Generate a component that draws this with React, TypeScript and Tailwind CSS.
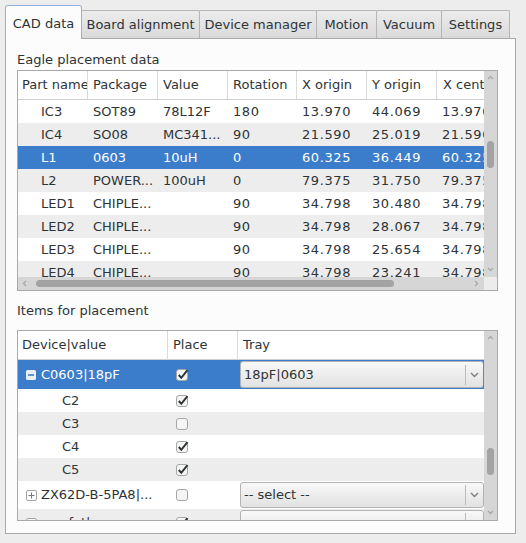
import React from 'react';

const tabs = [
  { name: 'CAD data', w: 'w-[77px]', active: true },
  { name: 'Board alignment', w: 'w-[119px]' },
  { name: 'Device manager', w: 'w-[118px]' },
  { name: 'Motion', w: 'w-[61px]' },
  { name: 'Vacuum', w: 'w-[66px]' },
  { name: 'Settings', w: 'w-[69px]' },
];

const columns = [
  { title: 'Part name', w: 'w-[70px]', pad: 'pl-[4px]' },
  { title: 'Package', w: 'w-[70px]', pad: 'pl-[5px]' },
  { title: 'Value', w: 'w-[70px]', pad: 'pl-[5px]' },
  { title: 'Rotation', w: 'w-[69px]', pad: 'pl-[5px]' },
  { title: 'X origin', w: 'w-[70px]', pad: 'pl-[5px]' },
  { title: 'Y origin', w: 'w-[70px]', pad: 'pl-[5px]' },
  { title: 'X center', w: 'w-[70px]', pad: 'pl-[6px]' },
];

const parts = [
  ['IC3', 'SOT89', '78L12F', '180', '13.970', '44.069', '13.970'],
  ['IC4', 'SO08', 'MC341...', '90', '21.590', '25.019', '21.590'],
  ['L1', '0603', '10uH', '0', '60.325', '36.449', '60.325'],
  ['L2', 'POWER...', '100uH', '0', '79.375', '31.750', '79.375'],
  ['LED1', 'CHIPLE...', '', '90', '34.798', '30.480', '34.798'],
  ['LED2', 'CHIPLE...', '', '90', '34.798', '28.067', '34.798'],
  ['LED3', 'CHIPLE...', '', '90', '34.798', '25.654', '34.798'],
  ['LED4', 'CHIPLE...', '', '90', '34.798', '23.241', '34.798'],
];

function Arrow({ dir }: { dir: 'up' | 'down' | 'left' | 'right' }) {
  const d = {
    up: 'M1 4 L3.5 1.5 L6 4',
    down: 'M1 2 L3.5 4.5 L6 2',
    left: 'M4 1 L1.5 3.5 L4 6',
    right: 'M2 1 L4.5 3.5 L2 6',
  }[dir];
  return (
    <svg width="7" height="7" viewBox="0 0 7 7">
      <path d={d} stroke="#a9a9a9" strokeWidth="1.3" fill="none" />
    </svg>
  );
}

function VScroll({ thumbTop }: { thumbTop: string }) {
  return (
    <div className="flex w-[13px] flex-col items-center bg-[#d6d6d6] py-[4px]">
      <Arrow dir="up" />
      <div className={`${thumbTop} h-[27px] w-[7px] rounded-full bg-[#a3a3a3]`} />
      <div className="flex-1" />
      <Arrow dir="down" />
    </div>
  );
}

function CheckBox({ checked }: { checked: boolean }) {
  return (
    <svg width="14" height="14" viewBox="0 0 14 14">
      <rect x="0.5" y="1.5" width="11" height="11" rx="2.5" fill="#f5f5f5" stroke="#a6a6a6" />
      {checked && <path d="M2.8 7 L5.3 9.8 L11.5 2.2" stroke="#2e3436" strokeWidth="2" fill="none" />}
    </svg>
  );
}

function Toggle({ open }: { open: boolean }) {
  return open ? (
    <svg width="10" height="10" viewBox="0 0 10 10">
      <rect x="0" y="0" width="10" height="10" rx="1.5" fill="#e9eff7" />
      <path d="M2 5 H8" stroke="#3b7dcb" strokeWidth="1.6" />
    </svg>
  ) : (
    <svg width="11" height="11" viewBox="0 0 11 11">
      <rect x="0.5" y="0.5" width="10" height="10" rx="1.5" fill="#ffffff" stroke="#a3a3a3" />
      <path d="M2.5 5.5 H8.5 M5.5 2.5 V8.5" stroke="#7a7a7a" strokeWidth="1" />
    </svg>
  );
}

function Combo({ text, focus }: { text: string; focus?: boolean }) {
  return (
    <div
      className={`flex h-full items-center rounded-[3px] border bg-gradient-to-b from-[#f8f8f8] to-[#e2e2e2] text-[#2e3436] ${
        focus ? 'border-[#b3b3b3] border-r-[#4f88cf]' : 'border-[#b3b3b3]'
      }`}
    >
      <span className="flex-1 pl-[3px] whitespace-nowrap">{text}</span>
      <span className="h-[20px] w-px bg-[#bcbcbc]" />
      <span className="flex w-[17px] justify-center">
        <svg width="9" height="6" viewBox="0 0 9 6">
          <path d="M1 1 L4.5 4.5 L8 1" stroke="#7b7b7b" strokeWidth="1.3" fill="none" />
        </svg>
      </span>
    </div>
  );
}

function PartsTable() {
  return (
    <div className="mt-[2px] flex h-[221px] w-[481px] flex-col border border-[#a9a9a9] bg-white">
      <div className="flex min-h-0 flex-1">
        <div className="w-[466px] overflow-hidden">
          <div className="flex h-[29px] border-b border-[#cfcfcf]">
            {columns.map(c => (
              <div
                key={c.title}
                className={`${c.w} ${c.pad} shrink-0 overflow-hidden whitespace-nowrap border-r border-[#dadada] leading-[28px]`}
              >
                {c.title}
              </div>
            ))}
          </div>
          {parts.map((row, i) => (
            <div
              key={row[0]}
              className={`flex h-[23px] items-center ${
                i === 2 ? 'bg-[#3b7dcb] text-white' : i % 2 ? 'bg-[#ededed]' : 'bg-white'
              }`}
            >
              {row.map((cell, j) => (
                <div
                  key={j}
                  className={`${columns[j].w} shrink-0 overflow-hidden whitespace-nowrap ${
                    j === 0 ? 'pl-[23px]' : 'pl-[5px]'
                  } ${j >= 3 ? 'tracking-[0.6px]' : ''}`}
                >
                  {cell}
                </div>
              ))}
            </div>
          ))}
        </div>
        <VScroll thumbTop="mt-[59px]" />
      </div>
      <div className="flex h-[13px]">
        <div className="flex flex-1 items-center bg-[#d6d6d6] px-[4px]">
          <Arrow dir="left" />
          <div className="ml-[7px] h-[7px] w-[358px] rounded-full bg-[#a3a3a3]" />
          <div className="flex-1" />
          <Arrow dir="right" />
        </div>
        <div className="w-[13px] bg-[#ececec]" />
      </div>
    </div>
  );
}

type Item = {
  name: string;
  level: number;
  checked: boolean;
  bg: string;
  h: string;
  toggle?: boolean;
  open?: boolean;
  tray?: string;
  selected?: boolean;
};

const items: Item[] = [
  { name: 'C0603|18pF', level: 0, checked: true, bg: 'bg-[#3b7dcb] text-white', h: 'h-[29px]', toggle: true, open: true, tray: '18pF|0603', selected: true },
  { name: 'C2', level: 1, checked: true, bg: 'bg-white', h: 'h-[23px]' },
  { name: 'C3', level: 1, checked: false, bg: 'bg-[#ededed]', h: 'h-[23px]' },
  { name: 'C4', level: 1, checked: true, bg: 'bg-white', h: 'h-[23px]' },
  { name: 'C5', level: 1, checked: true, bg: 'bg-[#ededed]', h: 'h-[23px]' },
  { name: 'ZX62D-B-5PA8|...', level: 0, checked: false, bg: 'bg-white', h: 'h-[28px]', toggle: true, tray: '-- select --' },
  { name: 'mosfet|...', level: 0, checked: true, bg: 'bg-[#ededed]', h: 'h-[28px]', toggle: true, tray: '' },
];

function ItemsTable() {
  return (
    <div className="mt-[11px] flex h-[191px] w-[481px] border border-[#a9a9a9] bg-white">
      <div className="w-[466px] overflow-hidden">
        <div className="flex h-[29px] border-b border-[#cfcfcf] leading-[28px]">
          <div className="w-[150px] border-r border-[#dadada] pl-[4px]">Device|value</div>
          <div className="w-[70px] border-r border-[#dadada] pl-[5px]">Place</div>
          <div className="flex-1 pl-[5px]">Tray</div>
        </div>
        {items.map(it => (
          <div key={it.name} className={`flex ${it.h} items-center ${it.bg}`}>
            <div className="flex w-[150px] items-center whitespace-nowrap">
              {it.level === 0 ? (
                <>
                  <span className="ml-[8px] flex w-[15px] items-center">{it.toggle && <Toggle open={!!it.open} />}</span>
                  <span>{it.name}</span>
                </>
              ) : (
                <span className="pl-[44px]">{it.name}</span>
              )}
            </div>
            <div className="flex w-[70px] items-center pl-[8px]">
              <CheckBox checked={it.checked} />
            </div>
            <div className="h-full flex-1 py-[1px] pl-[2px]">
              {it.tray !== undefined && <Combo text={it.tray} focus={it.selected} />}
            </div>
          </div>
        ))}
      </div>
      <VScroll thumbTop="mt-[106px]" />
    </div>
  );
}

export default function App() {
  return (
    <div className="h-[543px] w-[526px] bg-[#ededed] pl-[5px] pt-[4px] font-['DejaVu_Sans',sans-serif] text-[13px] text-[#2e3436]">
      <div className="flex h-[34px] items-end">
        {tabs.map(t =>
          t.active ? (
            <div
              key={t.name}
              className={`${t.w} relative z-10 -mb-px flex h-[34px] items-center justify-center rounded-t-[3px] border border-b-0 border-[#adadad] border-t-[#8db1dc] bg-[#fcfcfc] pt-[3px]`}
            >
              {t.name}
            </div>
          ) : (
            <div
              key={t.name}
              className={`${t.w} -ml-px flex h-[28px] items-center justify-center rounded-t-[2px] border border-b-0 border-[#b5b5b5] bg-gradient-to-b from-[#ececec] to-[#dadada]`}
            >
              {t.name}
            </div>
          ),
        )}
      </div>
      <div className="h-[496px] w-[511px] border border-[#a9a9a9] bg-[#fcfcfc] pl-[11px] pt-[13px]">
        <div className="leading-[16px]">Eagle placement data</div>
        <PartsTable />
        <div className="mt-[12px] leading-[16px]">Items for placement</div>
        <ItemsTable />
      </div>
    </div>
  );
}
